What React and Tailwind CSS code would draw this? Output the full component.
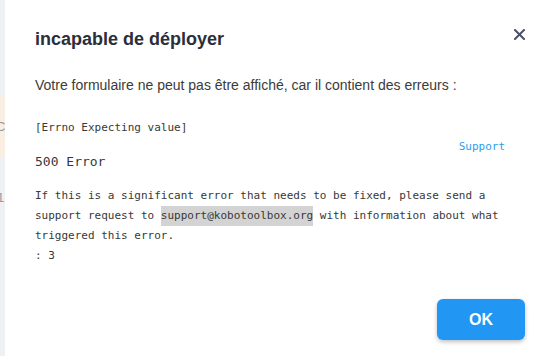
export default function App() {
  const mono = { fontFamily: '"DejaVu Sans Mono", "Liberation Mono", monospace' };
  return (
    <div
      className="flex h-[356px] w-[552px] overflow-hidden bg-white"
      style={{ fontFamily: '"Liberation Sans", Arial, sans-serif' }}
    >
      <div className="flex w-[5px] shrink-0 flex-col overflow-hidden bg-[#eef0f4]">
        <div className="h-[95px] shrink-0" />
        <div className="flex h-[62px] shrink-0 items-center overflow-hidden bg-[#f9eee2]">
          <span className="-ml-[4px] text-[13px] leading-none text-[#9a9a9a]">C</span>
        </div>
        <div className="mt-[32px] flex h-[16px] shrink-0 items-center overflow-hidden">
          <span className="-ml-[3px] text-[13px] leading-none text-[#9a9a9a]">1</span>
        </div>
      </div>

      <div className="flex flex-1 flex-col pl-[30px] pr-[27px] pt-[28px] pb-[16px]">
        <div className="flex items-start justify-between">
          <h1 className="text-[18px] font-bold leading-[22px] text-[#2b2e3b]">
            incapable de déployer
          </h1>
          <button className="mt-[1px] flex h-[11px] w-[11px] items-center justify-center">
            <svg width="11" height="11" viewBox="0 0 11 11" fill="none">
              <path d="M1 1L10 10M10 1L1 10" stroke="#4a5068" strokeWidth="2" strokeLinecap="square" />
            </svg>
          </button>
        </div>

        <p className="mt-[25px] text-[14px] leading-[20px] text-[#3b3b3b]">
          Votre formulaire ne peut pas être affiché, car il contient des erreurs :
        </p>

        <div className="mt-[23px] text-[11px] leading-[20px] text-[#383838]" style={mono}>
          [Errno Expecting value]
        </div>

        <div className="mt-[2px] flex justify-end pr-[20px]">
          <a className="text-[11px] leading-[14px] text-[#2d9cf0]" style={mono}>
            Support
          </a>
        </div>

        <div className="text-[13px] leading-[16px] text-[#383838]" style={mono}>
          500 Error
        </div>

        <div className="mt-[16px] text-[11px] leading-[20px] text-[#383838]" style={mono}>
          <div>
            If this is a significant error that needs to be fixed, please send a support request to{' '}
            <span className="bg-[#d3d3d3] pt-[3px] pb-[4px]">support@kobotoolbox.org</span> with information
            about what triggered this error.
          </div>
          <div>: 3</div>
        </div>

        <div className="mt-auto flex justify-end">
          <button className="flex h-[41px] w-[88px] items-center justify-center rounded-[6px] bg-[#2196f3] text-[16px] font-bold text-white shadow-[0_2px_4px_rgba(0,0,0,0.25)]">
            OK
          </button>
        </div>
      </div>
    </div>
  );
}
